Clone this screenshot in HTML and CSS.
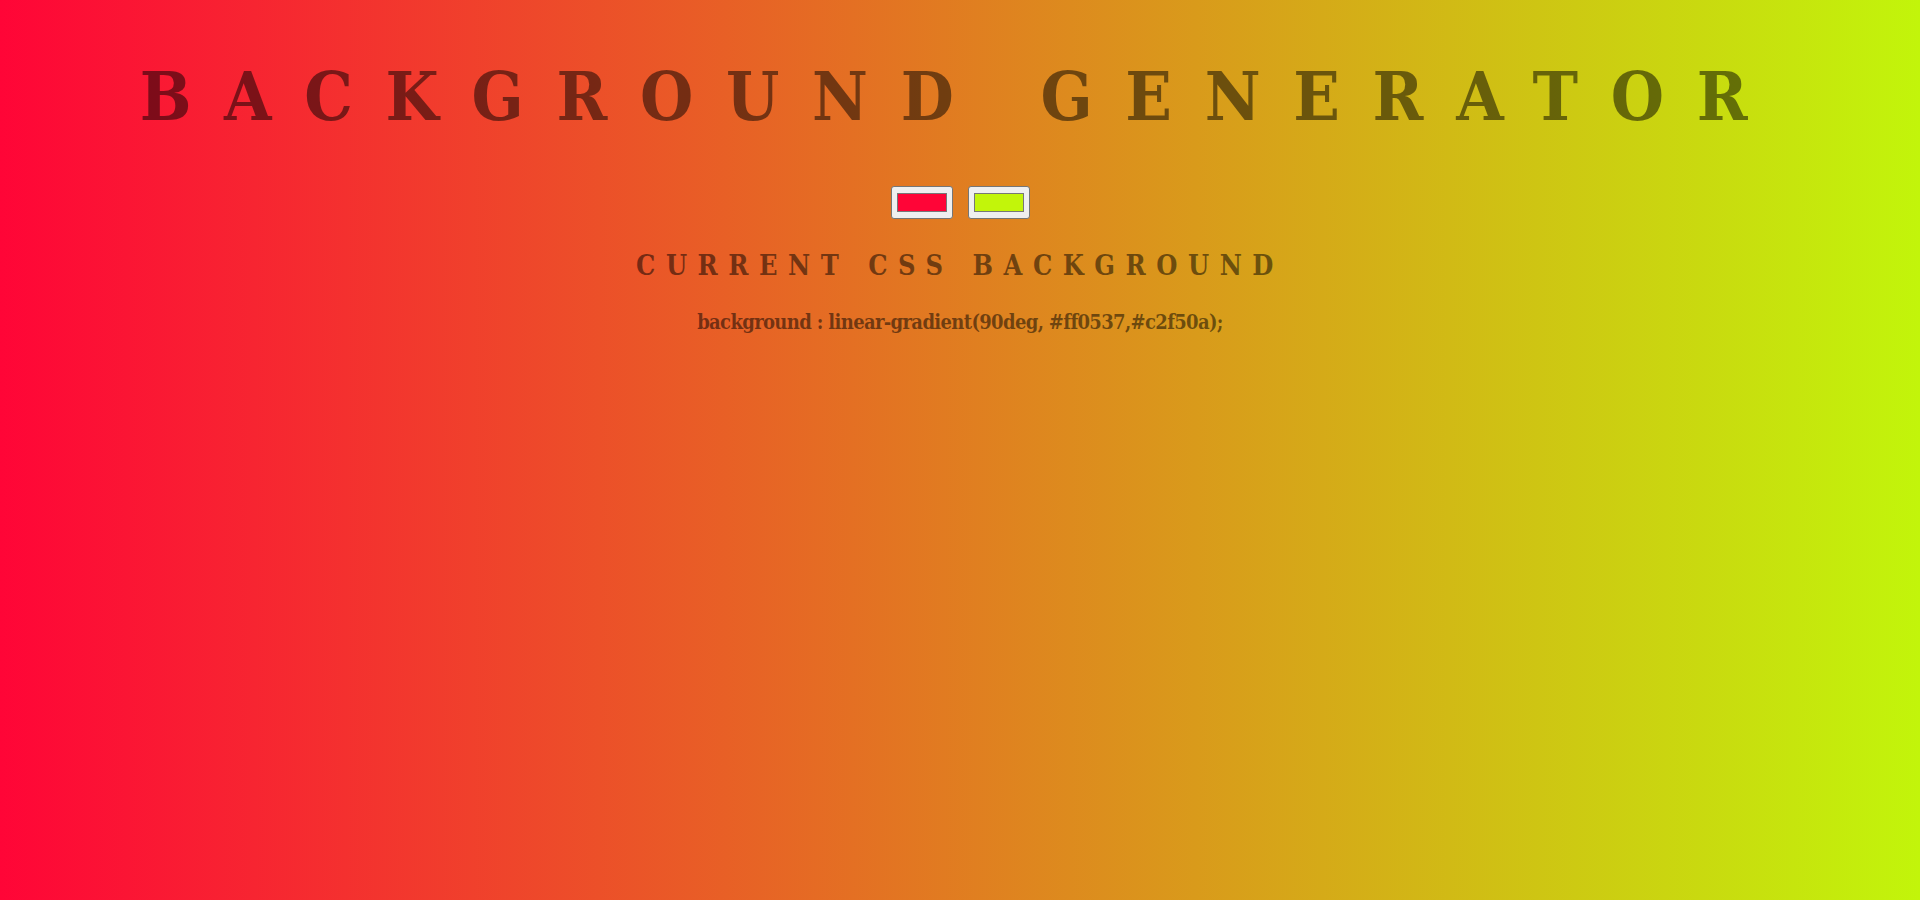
FILE: index.html
```html
<!DOCTYPE html>
<html lang="en">
<head>
<meta charset="utf-8">
<title>Background Generator</title>
<link rel="stylesheet" href="styles.css">
</head>
<body class="page">
  <h1 class="title">BACKGROUND GENERATOR</h1>
  <div class="pickers">
    <input class="picker" type="color" name="color1" value="#ff0537">
    <input class="picker" type="color" name="color2" value="#c2f50a">
  </div>
  <h3 class="subtitle">CURRENT CSS BACKGROUND</h3>
  <p class="css-output">background : linear-gradient(90deg, #ff0537,#c2f50a);</p>
</body>
</html>
```
FILE: styles.css
```css
html, body {
  margin: 0;
  padding: 0;
}

.page {
  min-height: 100vh;
  background: linear-gradient(90deg, #ff0537, #c2f50a);
  font-family: "DejaVu Serif Condensed", "DejaVu Serif", "Liberation Serif", serif;
  font-stretch: condensed;
  color: rgba(0, 0, 0, 0.5);
  text-align: center;
  overflow: hidden;
}

.title {
  margin: 56px 0 0;
  font-size: 68px;
  line-height: 80px;
  font-weight: bold;
  letter-spacing: 32.7px;
}

.pickers {
  display: flex;
  justify-content: center;
  gap: 15px;
  margin-top: 50px;
}

.picker {
  -webkit-appearance: none;
  appearance: none;
  box-sizing: border-box;
  width: 62px;
  height: 33px;
  padding: 0 5px;
  margin: 0;
  border: 1px solid #767676;
  border-radius: 3px;
  background: #efefef;
  cursor: pointer;
}

.picker::-webkit-color-swatch-wrapper {
  padding: 6px 0;
}

.picker::-webkit-color-swatch {
  border: 1px solid #777;
  border-radius: 0;
}

.subtitle {
  margin: 31px 0 0;
  font-size: 27px;
  line-height: 32px;
  font-weight: bold;
  letter-spacing: 10.5px;
}

.css-output {
  margin: 28px 0 0;
  font-size: 20px;
  line-height: 24px;
  font-weight: bold;
  letter-spacing: -0.65px;
}
```
